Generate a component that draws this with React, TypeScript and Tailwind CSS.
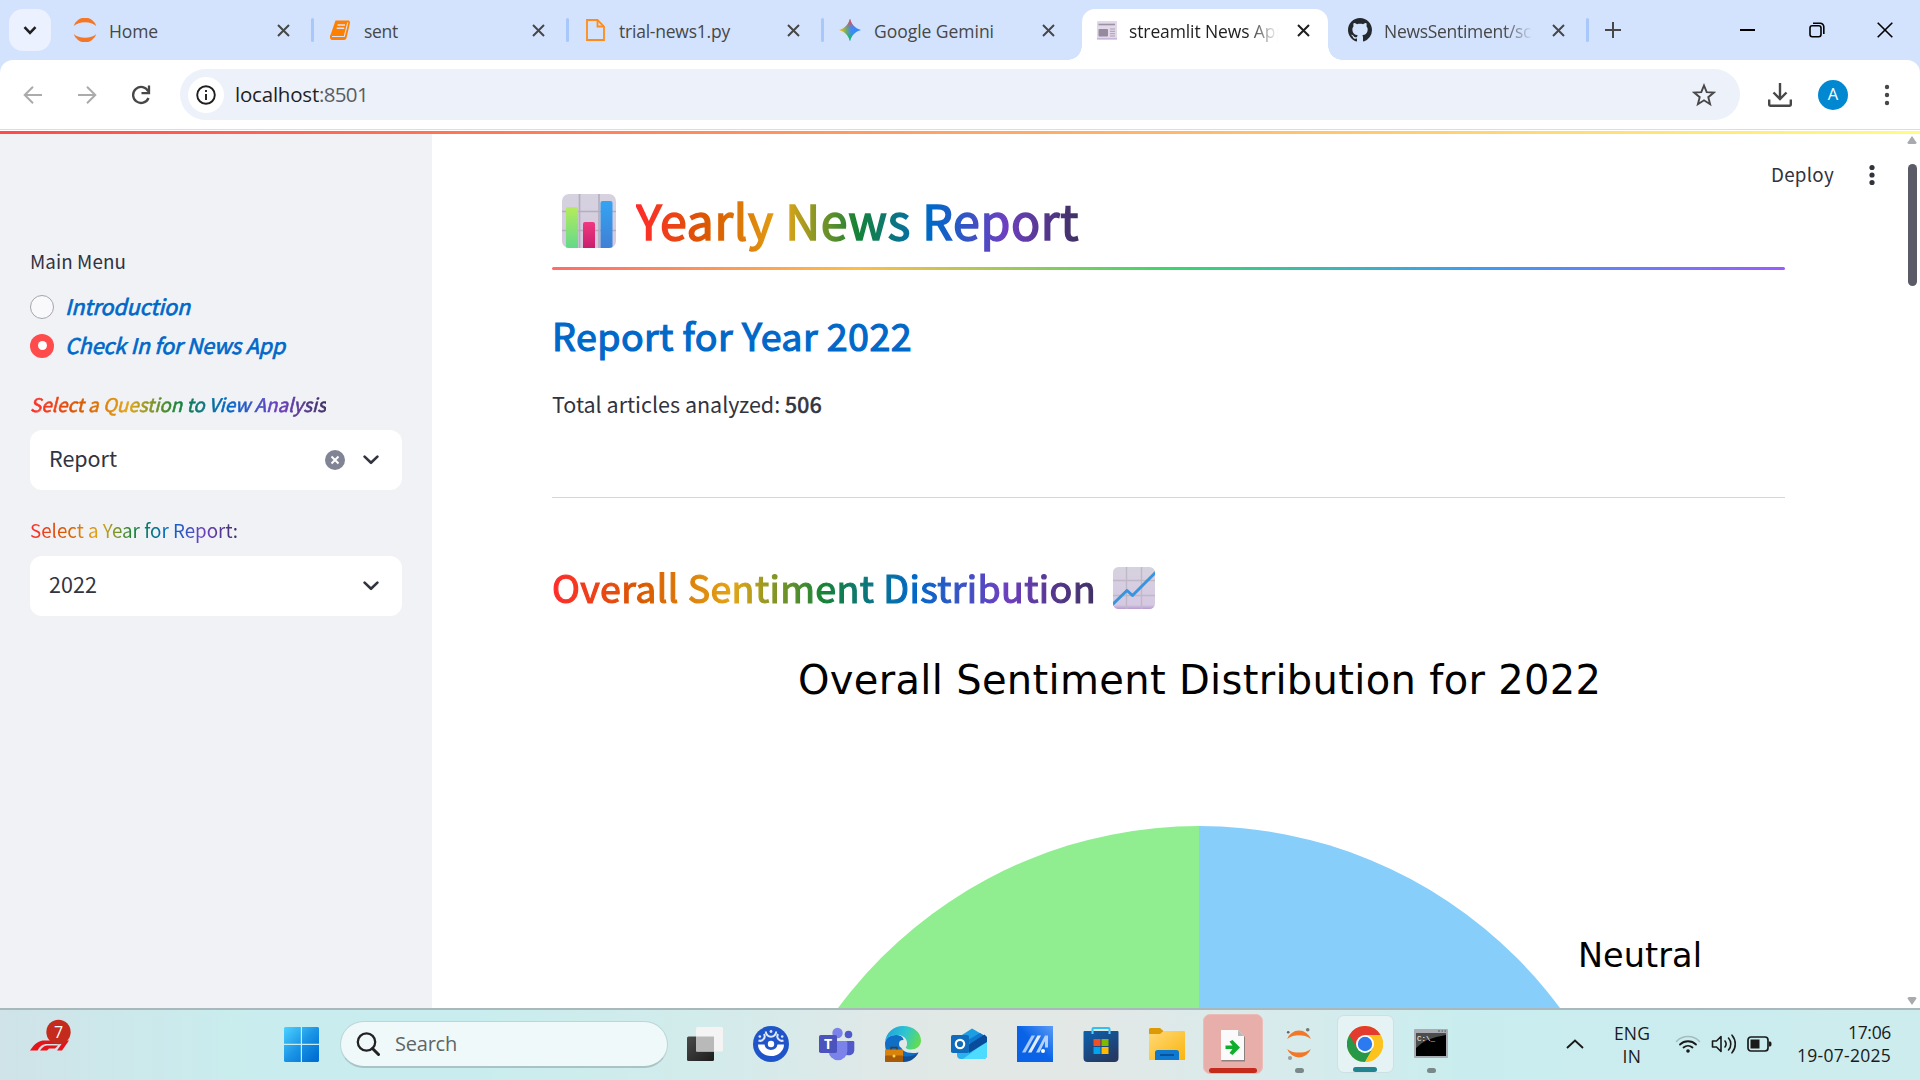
import { useLayoutEffect, useRef, type ReactNode } from "react";

/* One line of text whose tracking is adjusted so that it spans `w` pixels. */
function Fit({ w, className = "", children }: { w: number; className?: string; children: string }) {
  const ref = useRef<HTMLSpanElement>(null);
  useLayoutEffect(() => {
    const el = ref.current;
    if (!el) return;
    el.style.letterSpacing = "0px";
    const natural = el.getBoundingClientRect().width;
    el.style.letterSpacing = `${(w - natural) / children.length}px`;
  }, [w, children]);
  return (
    <span ref={ref} className={`inline-block whitespace-pre ${className}`}>
      {children}
    </span>
  );
}

const RAINBOW =
  "bg-[linear-gradient(to_right,#ff2b2b,#d95a00,#e2a516,#158237,#0068c9,#6d3fc0,#403062)] bg-clip-text text-transparent";

/* Semi-bold drawn as the regular cut with a thin outline. */
const SEMI = "font-normal [-webkit-text-stroke:0.032em_currentColor]";

/* ---------- tab strip ---------- */

function CloseX({ className = "text-[#474747]" }: { className?: string }) {
  return (
    <svg viewBox="0 0 13 13" className={`h-[13px] w-[13px] shrink-0 ${className}`} stroke="currentColor" strokeWidth="2">
      <path d="M1 1l11 11M12 1L1 12" />
    </svg>
  );
}

function JupyterMark() {
  return (
    <svg viewBox="0 0 24 24" className="h-6 w-6">
      <path d="M.7 8A11.8 11.8 0 0 1 23.3 8C20.500 5.500 16.600 4.200 12 4.200S3.500 5.500.7 8z" fill="#f37726" />
      <path d="M.7 16A11.800 11.800 0 0 0 23.300 16C20.500 18.500 16.600 19.800 12 19.800S3.500 18.500.7 16z" fill="#f37726" />
    </svg>
  );
}

function BookMark() {
  return (
    <svg viewBox="0 0 24 24" className="h-6 w-6">
      <path d="M7.500 2.500h13l.5 1-3.500 14.500H4.500L2.500 17z" fill="#ff8000" />
      <path d="M20.500 2.500c1.500.5 1.700 1.700 1.300 3.200L18.500 20c-.4 1.300-1 2-2.500 2H4.500c-2 0-2.800-1.500-2.500-4.500" fill="#ff8000" />
      <path d="M4 18.500h12.300l3.500-14" stroke="#d3e3fd" strokeWidth="1.100" fill="none" />
      <path d="M9.500 7h7.500M8.700 10.300h7.500" stroke="#d3e3fd" strokeWidth="1.500" />
    </svg>
  );
}

function FileMark() {
  return (
    <svg viewBox="0 0 24 24" className="h-6 w-6" fill="none" stroke="#ff8c1a" strokeWidth="1.800">
      <path d="M4 2h10.500L21 8.500V22H4z" />
      <path d="M14.500 2v6.500H21" />
    </svg>
  );
}

function GeminiMark() {
  return (
    <svg viewBox="0 0 24 24" className="h-6 w-6">
      <defs>
        <linearGradient id="gem" x1="0" y1="0" x2="1" y2="0">
          <stop offset="0.050" stopColor="#fbbc04" />
          <stop offset="0.350" stopColor="#6aa978" />
          <stop offset="0.550" stopColor="#3f8bf5" />
          <stop offset="1" stopColor="#3186ff" />
        </linearGradient>
        <linearGradient id="gemTop" x1="0" y1="0" x2="0" y2="1">
          <stop offset="0.050" stopColor="#f5443c" />
          <stop offset="0.420" stopColor="#f5443c" stopOpacity="0" />
          <stop offset="0.600" stopColor="#0ebc5f" stopOpacity="0" />
          <stop offset="0.900" stopColor="#0ebc5f" />
        </linearGradient>
      </defs>
      <path d="M12 .8C13.400 6.600 17.400 10.600 23 12 17.400 13.400 13.400 17.400 12 23.200 10.600 17.400 6.600 13.400 1 12 6.600 10.600 10.600 6.600 12 .8z" fill="url(#gem)" />
      <path d="M12 .8C13.400 6.600 17.400 10.600 23 12 17.400 13.400 13.400 17.400 12 23.200 10.600 17.400 6.600 13.400 1 12 6.600 10.600 10.600 6.600 12 .8z" fill="url(#gemTop)" />
    </svg>
  );
}

function NewsMark() {
  return (
    <svg viewBox="0 0 24 24" className="ml-px h-6 w-6">
      <rect x="3" y="3" width="20" height="18.500" rx="1" fill="#e2d8ea" />
      <rect x="3" y="20" width="20" height="1.500" fill="#c8b5da" />
      <path d="M4.500 6.500h16.500" stroke="#9a93a3" strokeWidth="1.600" />
      <rect x="4.500" y="11" width="9.500" height="7.500" rx="1" fill="#948b9e" />
      <path d="M16 11H21M16 13.300H21M16 15.700H21M16 18H21" stroke="#a79fb0" strokeWidth="1" />
    </svg>
  );
}

function GithubMark() {
  return (
    <svg viewBox="0 0 16 16" className="h-6 w-6" fill="#24292f">
      <path d="M8 0C3.580 0 0 3.580 0 8c0 3.540 2.290 6.530 5.470 7.590.4.070.55-.17.55-.38 0-.19-.01-.82-.01-1.490-2.010.37-2.530-.49-2.690-.94-.09-.23-.48-.94-.82-1.130-.28-.15-.68-.52-.01-.53.63-.01 1.080.58 1.230.82.72 1.210 1.870.87 2.330.66.070-.52.28-.87.51-1.070-1.780-.2-3.640-.89-3.640-3.950 0-.87.31-1.590.82-2.150-.08-.2-.36-1.020.08-2.120 0 0 .67-.21 2.200.82.64-.18 1.320-.27 2-.27s1.360.09 2 .27c1.530-1.040 2.200-.82 2.200-.82.44 1.100.16 1.920.08 2.120.51.56.82 1.270.82 2.150 0 3.070-1.870 3.750-3.650 3.950.29.25.54.73.54 1.480 0 1.070-.01 1.930-.01 2.200 0 .21.15.46.55.38A8.010 8.010 0 0 0 16 8c0-4.420-3.580-8-8-8z" />
    </svg>
  );
}

type TabProps = { icon: ReactNode; label: string; w: number; active?: boolean; fade?: boolean; sep?: boolean };

function Tab({ icon, label, w, active, fade, sep }: TabProps) {
  return (
    <div className="flex h-[60px] w-[255px] shrink-0 items-center">
      <div className="relative flex h-full w-[252px] items-center pr-[21px] pl-[14px]">
        {active && (
          <div className="absolute inset-x-[3px] top-[9px] bottom-0 rounded-t-[13px] bg-white">
            <div className="absolute bottom-0 -left-[14px] h-[14px] w-[14px] bg-[radial-gradient(circle_at_0_0,transparent_13.500px,white_14px)]" />
            <div className="absolute -right-[14px] bottom-0 h-[14px] w-[14px] bg-[radial-gradient(circle_at_100%_0,transparent_13.500px,white_14px)]" />
          </div>
        )}
        <div className="relative w-6">{icon}</div>
        <div
          className={`relative mt-[2px] ml-3 w-[149px] overflow-hidden text-[17.500px] leading-[30px] ${active ? "text-[#1f1f1f]" : "text-[#474747]"} ${fade ? "[mask-image:linear-gradient(to_right,black_80%,transparent)]" : ""}`}
        >
          <Fit w={w}>{label}</Fit>
        </div>
        <div className="relative ml-auto">
          <CloseX className={active ? "text-[#1f1f1f]" : "text-[#474747]"} />
        </div>
      </div>
      {sep && <div className="h-6 w-[3px] rounded bg-[#a8c7fa]" />}
    </div>
  );
}

function TabStrip() {
  return (
    <div className="flex h-[60px] items-center">
      <div className="ml-[9px] flex h-[42px] w-[42px] items-center justify-center rounded-[14px] bg-[#ebf1fe]">
        <svg viewBox="0 0 14 9" className="h-[9px] w-[14px]" fill="none" stroke="#1f1f1f" strokeWidth="2.600">
          <path d="M1.500 1.200L7 6.800l5.500-5.600" />
        </svg>
      </div>
      <div className="w-2" />
      <Tab icon={<JupyterMark />} label="Home" w={49} sep />
      <Tab icon={<BookMark />} label="sent" w={34} sep />
      <Tab icon={<FileMark />} label="trial-news1.py" w={111} sep />
      <Tab icon={<GeminiMark />} label="Google Gemini" w={120} />
      <Tab icon={<NewsMark />} label="streamlit News App" w={157} active fade />
      <Tab icon={<GithubMark />} label="NewsSentiment/scr" w={154} fade sep />
      <svg viewBox="0 0 16 16" className="ml-[16px] h-4 w-4" stroke="#474747" strokeWidth="2">
        <path d="M8 0v16M0 8h16" />
      </svg>
      <div className="mr-[27px] ml-auto flex items-center">
        <div className="h-[2px] w-[15px] bg-black" />
        <svg viewBox="0 0 16 16" className="ml-[54px] h-4 w-4" fill="none" stroke="#000" strokeWidth="1.600">
          <rect x="1" y="3.800" width="11" height="11" rx="2.200" />
          <path d="M4 1.300h7.300a3.500 3.500 0 0 1 3.500 3.500V12" />
        </svg>
        <svg viewBox="0 0 16 16" className="ml-[52px] h-4 w-4" stroke="#000" strokeWidth="1.600">
          <path d="M.7.700l14.600 14.600M15.300.7L.7 15.300" />
        </svg>
      </div>
    </div>
  );
}

function Toolbar() {
  return (
    <div className="flex h-[70px] items-center rounded-t-[13px] border-b border-[#dcdddf] bg-white">
      <svg viewBox="0 0 20 20" className="ml-[23px] h-5 w-5" fill="none" stroke="#ababab" strokeWidth="2">
        <path d="M19 10H2M10 1.700L1.700 10l8.300 8.300" />
      </svg>
      <svg viewBox="0 0 20 20" className="ml-[34px] h-5 w-5" fill="none" stroke="#ababab" strokeWidth="2">
        <path d="M1 10h17M10 1.700l8.300 8.300-8.300 8.300" />
      </svg>
      <svg viewBox="0 0 20 20" className="ml-[34px] h-5 w-5" fill="none" stroke="#474747" strokeWidth="2.300">
        <path d="M17.500 13A8 8 0 1 1 17.300 6.500" />
        <path d="M18 .5v7.700h-7.500" />
      </svg>
      <div className="ml-[29px] flex h-[51px] w-[1560px] items-center rounded-full bg-[#edf1fa] pl-2">
        <div className="flex h-9 w-9 items-center justify-center rounded-full bg-white">
          <svg viewBox="0 0 20 20" className="h-5 w-5" fill="none" stroke="#1f1f1f" strokeWidth="1.900">
            <circle cx="10" cy="10" r="8.800" />
            <path d="M10 9v6M10 5v2" />
          </svg>
        </div>
        <div className="mb-[2px] ml-[11px] text-[20.500px] leading-[30px]">
          <Fit w={84} className="text-[#1f1f1f]">localhost</Fit>
          <Fit w={49} className="text-[#5a5d61]">:8501</Fit>
        </div>
        <svg viewBox="0 0 24 24" className="mr-[24px] ml-auto h-6 w-6" fill="none" stroke="#474747" strokeWidth="1.900">
          <path d="M12 2.500l2.700 6.600 7.100.5-5.500 4.600 1.800 7-6.100-3.900-6.100 3.900 1.800-7-5.500-4.600 7.100-.5z" />
        </svg>
      </div>
      <svg viewBox="0 0 24 24" className="ml-[28px] h-6 w-6" fill="none" stroke="#474747" strokeWidth="2.400">
        <path d="M12 0v15M5.500 9.500L12 16l6.500-6.500M1.200 16.500v4.800a1.500 1.500 0 0 0 1.500 1.500h18.600a1.500 1.500 0 0 0 1.500-1.500v-4.800" />
      </svg>
      <div className="ml-[26px] flex h-[30px] w-[30px] items-center justify-center rounded-full bg-[#0288d1] text-[16.500px] text-white">
        A
      </div>
      <svg viewBox="0 0 6 22" className="ml-[36px] h-[22px] w-[6px]" fill="#474747">
        <circle cx="3" cy="3" r="2.200" />
        <circle cx="3" cy="11" r="2.200" />
        <circle cx="3" cy="19" r="2.200" />
      </svg>
    </div>
  );
}

/* ---------- sidebar ---------- */

function Chevron() {
  return (
    <svg viewBox="0 0 16 10" className="h-[10px] w-4" fill="none" stroke="#31333f" strokeWidth="2.600" strokeLinecap="round" strokeLinejoin="round">
      <path d="M1.600 1.600L8 7.800l6.400-6.200" />
    </svg>
  );
}

function SelectBox({ value, w, clearable }: { value: string; w: number; clearable?: boolean }) {
  return (
    <div className="mt-[11px] flex h-[60px] items-center rounded-xl bg-white pr-[23px] pl-[19px] text-[21.500px] text-[#31333f]">
      <Fit w={w} className="mb-[3px]">{value}</Fit>
      <div className="ml-auto flex items-center gap-[18px]">
        {clearable && (
          <svg viewBox="0 0 20 20" className="h-5 w-5">
            <circle cx="10" cy="10" r="10" fill="#808495" />
            <path d="M6.500 6.500l7 7M13.500 6.500l-7 7" stroke="#fff" strokeWidth="2" />
          </svg>
        )}
        <Chevron />
      </div>
    </div>
  );
}

function Radio({ label, w, on }: { label: string; w: number; on?: boolean }) {
  return (
    <div className="flex h-[39px] items-center">
      {on ? (
        <div className="flex h-6 w-6 items-center justify-center rounded-full bg-[#ff4b4b]">
          <div className="h-[9px] w-[9px] rounded-full bg-white" />
        </div>
      ) : (
        <div className="h-6 w-6 rounded-full border-[1.500px] border-[#a3a5ab] bg-[#f9f9fb]" />
      )}
      <Fit w={w} className={`ml-[11px] text-[21.500px] text-[#0068c9] italic ${SEMI}`}>
        {label}
      </Fit>
    </div>
  );
}

function Sidebar() {
  return (
    <aside className="w-[432px] shrink-0 bg-[#f0f2f6] px-[30px] pt-[113px]">
      <div className="h-7 text-[18.800px] leading-7 text-[#31333f]">
        <Fit w={96}>Main Menu</Fit>
      </div>
      <div className="mt-[12px]">
        <Radio label="Introduction" w={125} />
        <Radio label="Check In for News App" w={220} on />
      </div>
      <div className="mt-[24px] h-[30px] text-[18.800px] leading-[30px]">
        <Fit w={296} className={`italic ${SEMI} ${RAINBOW}`}>Select a Question to View Analysis</Fit>
      </div>
      <SelectBox value="Report" w={68} clearable />
      <div className="mt-[25px] h-[30px] text-[18.800px] leading-[30px]">
        <Fit w={208} className={RAINBOW}>Select a Year for Report:</Fit>
      </div>
      <SelectBox value="2022" w={48} />
    </aside>
  );
}

/* ---------- report ---------- */

function BarChartEmoji() {
  return (
    <svg viewBox="0 0 54 54" className="h-[54px] w-[54px]">
      <defs>
        <linearGradient id="bg1" x1="0" y1="0" x2="0" y2="1">
          <stop offset="0" stopColor="#d6d2df" />
          <stop offset="1" stopColor="#d5c9e0" />
        </linearGradient>
        <linearGradient id="gr" x1="0" y1="0" x2="0" y2="1">
          <stop offset="0" stopColor="#b4ec5c" />
          <stop offset="1" stopColor="#62d98b" />
        </linearGradient>
        <linearGradient id="pk" x1="0" y1="0" x2="0" y2="1">
          <stop offset="0" stopColor="#f0397f" />
          <stop offset="1" stopColor="#c81e6e" />
        </linearGradient>
        <linearGradient id="bl" x1="0" y1="0" x2="0" y2="1">
          <stop offset="0" stopColor="#35a4f3" />
          <stop offset="1" stopColor="#3f7fd4" />
        </linearGradient>
        <clipPath id="clip1">
          <rect width="54" height="54" rx="7" />
        </clipPath>
      </defs>
      <g clipPath="url(#clip1)">
        <rect width="54" height="54" fill="url(#bg1)" />
        <path d="M17.500 0v54M37 0v54M0 17.500h54M0 36.500h54" stroke="#b5afbd" strokeWidth="1.700" />
        <path d="M4 54V15a2 2 0 0 1 2-2h8a2 2 0 0 1 2 2v39z" fill="url(#gr)" />
        <path d="M21 54V30a2 2 0 0 1 2-2h8a2 2 0 0 1 2 2v24z" fill="url(#pk)" />
        <path d="M38.500 54V9a2 2 0 0 1 2-2h8a2 2 0 0 1 2 2v45z" fill="url(#bl)" />
      </g>
    </svg>
  );
}

function LineChartEmoji() {
  return (
    <svg viewBox="0 0 42 42" className="h-[42px] w-[42px]">
      <defs>
        <linearGradient id="bg2" x1="0" y1="0" x2="0" y2="1">
          <stop offset="0" stopColor="#d6d2df" />
          <stop offset="0.900" stopColor="#d6c9e3" />
          <stop offset="1" stopColor="#b79bd0" />
        </linearGradient>
        <clipPath id="clip2">
          <rect width="42" height="42" rx="5.500" />
        </clipPath>
      </defs>
      <g clipPath="url(#clip2)">
        <rect width="42" height="42" fill="url(#bg2)" />
        <path d="M13.500 0v42M28.500 0v42M0 13.500h42M0 28.500h42" stroke="#bfb8c7" strokeWidth="1.400" />
        <path d="M-1 38L14 23.500l5.500 5L43 5" stroke="#3895dd" strokeWidth="3" fill="none" strokeLinejoin="round" />
      </g>
    </svg>
  );
}

function PieChart() {
  return (
    <svg viewBox="0 0 1233 396" className="block h-[396px] w-[1233px]">
      <path d="M647 214A449 449 0 0 0 198 663H647z" fill="#90ee90" />
      <path d="M647 214A449 449 0 0 1 1096 663H647z" fill="#87cefa" />
      <g fontFamily="DejaVu Sans, sans-serif" fill="#000">
        <text x="246" y="81.500" fontSize="40" textLength="803">
          Overall Sentiment Distribution for 2022
        </text>
        <text x="1026" y="355" fontSize="33.500" textLength="124">
          Neutral
        </text>
      </g>
    </svg>
  );
}

function Report() {
  return (
    <main className="min-w-0 flex-1 bg-white pl-[120px] text-[#31333f]">
      <div className="w-[1233px]">
        <h1 className="mt-[52px] flex h-[66px] items-center pl-[10px] text-[48.300px] leading-[66px]">
          <div className="mt-1">
            <BarChartEmoji />
          </div>
          <Fit w={443} className={`ml-5 ${SEMI} ${RAINBOW}`}>Yearly News Report</Fit>
        </h1>
        <div className="mt-[15px] h-[3px] rounded bg-[linear-gradient(to_right,#ff6b6b,#ffbd45,#3dd56d,#3d9df3,#9a5cff)]" />
        <h2 className="mt-[40px] h-[50px] text-[37.600px] leading-[50px] text-[#0068c9]">
          <Fit w={360} className={SEMI}>Report for Year 2022</Fit>
        </h2>
        <p className="mt-[26px] h-9 text-[21.500px] leading-9">
          <Fit w={233}>Total articles analyzed: </Fit>
          <Fit w={37} className={SEMI}>506</Fit>
        </p>
        <div className="mt-[75px] h-px bg-[#d6d6d9]" />
        <h3 className="mt-[64px] flex h-[50px] items-center text-[37.600px] leading-[50px]">
          <Fit w={544} className={`${SEMI} ${RAINBOW}`}>Overall Sentiment Distribution</Fit>
          <div className="mt-[2px] ml-[17px]">
            <LineChartEmoji />
          </div>
        </h3>
        <PieChart />
      </div>
    </main>
  );
}

/* Header controls and scroll bar, floating over the report. */
function Overlay() {
  return (
    <>
      <div className="absolute top-[23px] right-[45px] flex h-[36px] items-center text-[18.800px] text-[#31333f]">
        <Fit w={63} className="mb-[2px]">Deploy</Fit>
        <svg viewBox="0 0 6 22" className="ml-[35px] h-[22px] w-[6px]" fill="#31333f">
          <circle cx="3" cy="3.500" r="2.600" />
          <circle cx="3" cy="11" r="2.600" />
          <circle cx="3" cy="18.500" r="2.600" />
        </svg>
      </div>
      <div className="absolute inset-y-0 right-[3px] flex w-[10px] flex-col items-center">
        <svg viewBox="0 0 10 8" className="mt-[2px] h-2 w-[10px]" fill="#a9aaaf">
          <path d="M5 0l4.500 6.500Q9.500 8 8 8H2Q.500 8 .5 6.500z" />
        </svg>
        <div className="mt-5 h-[122px] w-[9px] rounded-full bg-[#5a5b66]" />
        <svg viewBox="0 0 10 8" className="mt-auto mb-[3px] h-2 w-[10px]" fill="#a9aaaf">
          <path d="M5 8L.5 1.500Q.500 0 2 0h6q1.500 0 1.500 1.500z" />
        </svg>
      </div>
    </>
  );
}

/* ---------- taskbar ---------- */

function Slot({ children, mark }: { children: ReactNode; mark?: boolean }) {
  return (
    <div className="relative flex h-[60px] w-[66px] shrink-0 items-center justify-center">
      {children}
      {mark && <div className="absolute bottom-[1px] h-[5px] w-[9px] rounded-full bg-[#7b8889]" />}
    </div>
  );
}

function TaskIcons() {
  return (
    <div className="ml-[4px] flex items-center">
      <Slot>
        <svg viewBox="0 0 36 36" className="h-9 w-9">
          <defs>
            <linearGradient id="tv" x1="0" y1="0" x2="1" y2="1">
              <stop offset="0" stopColor="#4a4a4a" />
              <stop offset="1" stopColor="#1c1c1c" />
            </linearGradient>
          </defs>
          <rect x="0" y="10.500" width="27" height="24.500" rx="1.500" fill="url(#tv)" />
          <rect x="9" y="1" width="27" height="24.500" rx="1.500" fill="#f4f4f4" />
          <rect x="9" y="10.500" width="18" height="15" fill="#b9b9b9" />
        </svg>
      </Slot>
      <Slot>
        <svg viewBox="0 0 36 36" className="h-9 w-9" fill="none">
          <circle cx="18" cy="18" r="18" fill="#1f55c8" />
          <circle cx="18" cy="18" r="3.200" fill="#fff" />
          <path d="M5 18.500h6.500a6.600 6.600 0 0 0 13 0H31A13 11.500 0 0 1 5 18.500z" fill="#fff" />
          <g stroke="#dfe8fb" strokeWidth="2">
            <path d="M12.800 5.500a5 5 0 0 0 10.400 0" />
            <path d="M5.500 14.500a4.500 4.500 0 0 0 5.500-6.500" />
            <path d="M30.500 14.500A4.500 4.500 0 0 1 25 8" />
          </g>
          <circle cx="18" cy="5.500" r="1.400" fill="#dfe8fb" />
          <circle cx="6.800" cy="10.500" r="1.300" fill="#dfe8fb" />
          <circle cx="29.200" cy="10.500" r="1.300" fill="#dfe8fb" />
        </svg>
      </Slot>
      <Slot>
        <svg viewBox="0 0 36 36" className="h-9 w-9">
          <circle cx="29.500" cy="8.500" r="3.800" fill="#5059c9" />
          <path d="M25 15h9a1.300 1.300 0 0 1 1.300 1.300V24a5.500 5.500 0 0 1-10.300 2.500z" fill="#5059c9" />
          <circle cx="18.500" cy="7" r="5.200" fill="#7b83eb" />
          <path d="M10 15h17a1.300 1.300 0 0 1 1.300 1.300V25a9.300 9.300 0 0 1-18.600 0z" fill="#7b83eb" />
          <rect x="0" y="9" width="18" height="18" rx="1.800" fill="#4b53bc" />
          <text x="9" y="23" fontSize="14" fontWeight="700" fill="#fff" textAnchor="middle" fontFamily="Open Sans, sans-serif">
            T
          </text>
        </svg>
      </Slot>
      <Slot>
        <svg viewBox="0 0 36 36" className="h-9 w-9">
          <defs>
            <linearGradient id="edge" x1="0" y1="0.200" x2="1" y2="0.500">
              <stop offset="0" stopColor="#1e9fe0" />
              <stop offset="0.550" stopColor="#2fc6cf" />
              <stop offset="1" stopColor="#62dc52" />
            </linearGradient>
          </defs>
          <path d="M0 18C0 12 5 8.500 12 9c7 1 8 6 5 9-3 5 3 11 16.500 8.500C29 34 21 37 14 35.500 5 34 0 26 0 18z" fill="#0f6fc6" />
          <path d="M17 30c5 1 12 .5 16.500-3.500C30 33 25 36 18 36z" fill="#124e96" />
          <path d="M0 16C1 7 8 0 18 0c11 0 18 7 18 14.500 0 6-5 9-10 9-4 0-6-1.500-5-3.500 2.500-3.500.5-11-9.500-11C5 9 1 12 0 16z" fill="url(#edge)" />
          <circle cx="18" cy="18" r="4" fill="#e2e8e7" />
          <rect x="0" y="23.500" width="18" height="12.500" rx="1" fill="#d9820c" />
          <rect x="0" y="29.500" width="18" height="6.500" rx="1" fill="#a95a07" />
          <path d="M6 23.500v-2h6v2" stroke="#5d3510" strokeWidth="1.300" fill="none" />
          <circle cx="9" cy="30" r="1.500" fill="#ffd34d" />
        </svg>
      </Slot>
      <Slot>
        <svg viewBox="0 0 36 36" className="h-9 w-9">
          <path d="M7 11.500L21 2.500 34 10v16H7z" fill="#1c9fe2" />
          <path d="M17 14L29 7l5.500 3.500L20 20z" fill="#0f78cf" />
          <path d="M6 20l12-1 18-7v17a4 4 0 0 1-4 4H10a4 4 0 0 1-4-4z" fill="#2ab2ee" />
          <path d="M12 33l24-18v14a4 4 0 0 1-4 4z" fill="#4ddcff" />
          <path d="M17 19L33.500 8.500 36 11v5L18 27z" fill="#0a4c9c" />
          <rect x="0" y="9" width="18" height="18" rx="1.800" fill="#0f6cbd" />
          <circle cx="9" cy="18" r="4.200" stroke="#fff" strokeWidth="2.200" fill="none" />
        </svg>
      </Slot>
      <Slot>
        <svg viewBox="0 0 36 36" className="h-9 w-9">
          <defs>
            <linearGradient id="asus" x1="0" y1="1" x2="1" y2="0">
              <stop offset="0.500" stopColor="#0a63e6" />
              <stop offset="1" stopColor="#5b9cf7" />
            </linearGradient>
          </defs>
          <rect width="36" height="36" fill="url(#asus)" />
          <path d="M5 26.500L14.500 9.500H18L8.500 26.500z" fill="#a9c8fb" />
          <path d="M11 26.500l9.500-17H24l-9.500 17z" fill="#e3edff" />
          <path d="M19 26.500l9-17h3v12h-3v-6.500L22.500 26.500z" fill="#b7d2fd" />
          <circle cx="26" cy="25" r="2" fill="#fff" />
        </svg>
      </Slot>
      <Slot>
        <svg viewBox="0 0 36 36" className="h-9 w-9">
          <defs>
            <linearGradient id="store" x1="0" y1="0" x2="0.600" y2="1">
              <stop offset="0" stopColor="#0b61b0" />
              <stop offset="1" stopColor="#243a63" />
            </linearGradient>
          </defs>
          <path d="M9.500 7V3a1 1 0 0 1 1-1h15a1 1 0 0 1 1 1v4" stroke="#33bff0" strokeWidth="2" fill="none" />
          <path d="M.5 6a1 1 0 0 1 1-1h33a1 1 0 0 1 1 1v26a4 4 0 0 1-4 4h-27a4 4 0 0 1-4-4z" fill="url(#store)" />
          <path d="M9.500 5v3M26.500 5v3" stroke="#5ad2ff" strokeWidth="2" />
          <rect x="10.500" y="13" width="7" height="7" fill="#f25022" />
          <rect x="18.500" y="13" width="7" height="7" fill="#7fba00" />
          <rect x="10.500" y="21" width="7" height="7" fill="#00a4ef" />
          <rect x="18.500" y="21" width="7" height="7" fill="#ffb900" />
        </svg>
      </Slot>
      <Slot>
        <svg viewBox="0 0 36 36" className="h-9 w-9">
          <defs>
            <linearGradient id="fold" x1="0" y1="0" x2="1" y2="1">
              <stop offset="0" stopColor="#ffd978" />
              <stop offset="1" stopColor="#fbb50d" />
            </linearGradient>
          </defs>
          <path d="M0 3.500A1.500 1.500 0 0 1 1.500 2H11l4 3.500L12 10H0z" fill="#dd9a05" />
          <path d="M0 8h11l3.500-3H35a1 1 0 0 1 1 1v28H0z" fill="url(#fold)" />
          <path d="M6 34v-7.500A2.500 2.500 0 0 1 8.500 24h19a2.500 2.500 0 0 1 2.500 2.500V34z" fill="#0f78cf" />
          <path d="M11 29h14" stroke="#0a4d94" strokeWidth="1.800" />
        </svg>
      </Slot>
      <Slot>
        <div className="relative flex h-[60px] w-[60px] shrink-0 items-center justify-center rounded-[7px] border border-[#ecbcb8] bg-[#e8aeaa]">
          <svg viewBox="0 0 36 36" className="h-9 w-9">
            <path d="M6.500 5h17l6.500 6v24.500H6.500z" fill="#8f8080" />
            <path d="M6 4h17l6 6v24H6z" fill="#fafafa" />
            <path d="M23 4v6h6z" fill="#b9b9b9" />
            <path d="M10.500 19.500h7l-3-4 3-1.500 7.500 7.500-7.500 7.500-3-2 3-4h-7z" fill="#0fae2c" />
          </svg>
          <div className="absolute bottom-0 h-[5px] w-12 rounded-full bg-[#c42b1c]" />
        </div>
      </Slot>
      <Slot mark>
        <svg viewBox="0 0 36 36" className="h-9 w-9" fill="#f37726">
          <path d="M6.200 13A12.500 12.500 0 0 1 29.800 13C26.500 10 22 9.200 18 9.200S9.500 10 6.200 13z" />
          <path d="M6.200 23A12.500 12.500 0 0 0 29.800 23C26.500 26 22 26.500 18 26.500S9.500 26 6.200 23z" />
          <circle cx="26.700" cy="3.700" r="1.800" fill="#767677" />
          <circle cx="7.200" cy="6.300" r="1.300" fill="#616262" />
          <circle cx="9" cy="32" r="2.100" fill="#9e9e9e" />
        </svg>
      </Slot>
      <Slot>
        <div className="relative flex h-[58px] w-[57px] items-center justify-center rounded-[7px] border border-[#cfe0e2] bg-[#e6f3f4]">
          <svg viewBox="0 0 36 36" className="h-9 w-9">
            <circle cx="18" cy="18" r="18" fill="#fcc934" />
            <path d="M2.400 9A18 18 0 0 0 18 36l7.800-13.500L18 18z" fill="#279847" />
            <path d="M2.400 9A18 18 0 0 1 33.600 9H18v9l-7.800 4.500z" fill="#e33b2e" />
            <path d="M33.600 9A18 18 0 0 1 18 36l7.800-13.500L18 9z" fill="#fcc31e" />
            <circle cx="18" cy="18" r="9" fill="#fff" />
            <circle cx="18" cy="18" r="7.200" fill="#2b7af0" />
          </svg>
          <div className="absolute bottom-0 h-[5px] w-6 rounded-full bg-[#21848f]" />
        </div>
      </Slot>
      <Slot mark>
        <svg viewBox="0 0 36 36" className="h-9 w-9">
          <rect x="1" y="3" width="34" height="29" rx="1" fill="#a9adb3" />
          <rect x="3" y="7" width="30" height="23" fill="#000" />
          <path d="M3 7h30v2Q12 12 3 22z" fill="#4c4c4c" />
          <text x="4" y="14.500" fontSize="7.500" fill="#fff" fontFamily="Liberation Mono, monospace">
            C:\_
          </text>
          <path d="M25 5h2M28.500 5h1.500M31.500 5h1.500" stroke="#555" strokeWidth="1.200" />
        </svg>
      </Slot>
    </div>
  );
}

function Taskbar() {
  return (
    <footer className="flex h-[72px] items-center border-t-2 border-[#a9b9bb] bg-[linear-gradient(to_right,#cfe3e8,#c9edee_13%,#c9edee_25%,#d3ebeb_37%,#e0e8e7_47%,#e3e8e6_56%,#d6ebec_68%,#c9edee_76%,#cdecee)] pb-[2px]">
      <svg viewBox="0 0 44 34" className="mb-[18px] ml-[29px] h-[34px] w-[44px]">
        <path d="M1 32.500C6 25 10 22.500 16 22.500h20l-4 3.500H18c-4 0-7 2-9.500 6.500z" fill="#e8121b" />
        <path d="M11 32.500c3-4 5-5 8-5h10l-3 3h-6l-2 2zM28 32.500l7-10h5l-7 10z" fill="#e8121b" />
        <circle cx="29.500" cy="14" r="12.200" fill="#c42b1c" />
        <text x="29.500" y="19.800" fontSize="16" fill="#fff" textAnchor="middle" fontFamily="Open Sans, sans-serif">
          7
        </text>
      </svg>
      <svg viewBox="0 0 35 35" className="ml-[211px] h-[35px] w-[35px]">
        <defs>
          <linearGradient id="win" x1="0" y1="0" x2="35" y2="35" gradientUnits="userSpaceOnUse">
            <stop offset="0" stopColor="#4cd2ff" />
            <stop offset="0.500" stopColor="#1a94e6" />
            <stop offset="0.900" stopColor="#0070d4" />
          </linearGradient>
        </defs>
        <path d="M1 0h15.800v16.800H0V1zM18 0h16l1 1v15.800H18zM0 18h16.800v17H1l-1-1zM18 18h17v16l-1 1H18z" fill="url(#win)" />
      </svg>
      <div className="ml-[21px] flex h-[47px] w-[328px] items-center rounded-full border border-b-2 border-[#bcd5d8] border-b-[#a9c3c6] bg-[#f0f9fa] pl-[15px]">
        <svg viewBox="0 0 24 24" className="h-6 w-6" fill="none" stroke="#222" strokeWidth="2.300">
          <circle cx="10.500" cy="10" r="8.700" />
          <path d="M16.500 16.500l6 6" strokeWidth="3" strokeLinecap="round" />
        </svg>
        <Fit w={62} className="ml-[15px] text-[20px] text-[#5f6566]">Search</Fit>
      </div>
      <TaskIcons />
      <svg viewBox="0 0 18 10" className="ml-[102px] h-[10px] w-[18px]" fill="none" stroke="#1a1a1a" strokeWidth="1.900">
        <path d="M1 9l8-7.500L17 9" />
      </svg>
      <div className="mt-[2px] ml-[30px] flex w-[36px] flex-col items-center text-[17.500px] leading-[23px] text-[#1a1a1a]">
        <Fit w={36}>ENG</Fit>
        <Fit w={19}>IN</Fit>
      </div>
      <svg viewBox="0 0 26 20" className="ml-[25px] h-5 w-[26px]" fill="none" stroke="#1a1a1a" strokeWidth="1.800" strokeLinecap="round">
        <path d="M1.500 7.500a16 16 0 0 1 23 0" stroke="#a3bcbe" strokeWidth="1.500" />
        <path d="M5 10.500a11.500 11.500 0 0 1 16 0M8.500 13.500a6.800 6.800 0 0 1 9 0" />
        <circle cx="13" cy="17" r="1.800" fill="#1a1a1a" stroke="none" />
      </svg>
      <svg viewBox="0 0 26 20" className="ml-[10px] h-5 w-[26px]" fill="none" stroke="#1a1a1a" strokeWidth="1.600" strokeLinecap="round" strokeLinejoin="round">
        <path d="M1.500 7h4L10 2.500v15L5.500 13h-4z" />
        <path d="M14 7a5 5 0 0 1 0 6M17.500 4a9 9 0 0 1 0 12M21 1.200a13.500 13.500 0 0 1 0 17.600" />
      </svg>
      <svg viewBox="0 0 26 16" className="ml-[10px] h-4 w-[26px]" fill="none" stroke="#1a1a1a" strokeWidth="1.700">
        <rect x="1" y="1" width="20" height="14" rx="3" />
        <rect x="3.500" y="3.500" width="9" height="9" fill="#1a1a1a" stroke="none" />
        <path d="M22 5.500c2 0 2.500.5 2.500 2.500s-.5 2.500-2.500 2.500z" fill="#1a1a1a" stroke="none" />
      </svg>
      <div className="mr-[29px] ml-auto flex flex-col items-end text-[17.500px] leading-[23px] text-[#1a1a1a]">
        <Fit w={43}>17:06</Fit>
        <Fit w={94}>19-07-2025</Fit>
      </div>
    </footer>
  );
}

export default function App() {
  return (
    <div className="flex h-[1080px] w-[1920px] flex-col overflow-hidden bg-white font-['Open_Sans',sans-serif]">
      <header className="h-[130px] shrink-0 bg-[#d3e3fd]">
        <TabStrip />
        <Toolbar />
      </header>
      <div className="mt-px h-[3px] shrink-0 bg-[linear-gradient(to_right,#ff4b4b,#fffd80)]" />
      <div className="relative flex h-[874px] shrink-0 overflow-hidden font-['Noto_Sans_CJK_JP','Noto_Sans_CJK_SC',sans-serif]">
        <Sidebar />
        <Report />
        <Overlay />
      </div>
      <Taskbar />
    </div>
  );
}
